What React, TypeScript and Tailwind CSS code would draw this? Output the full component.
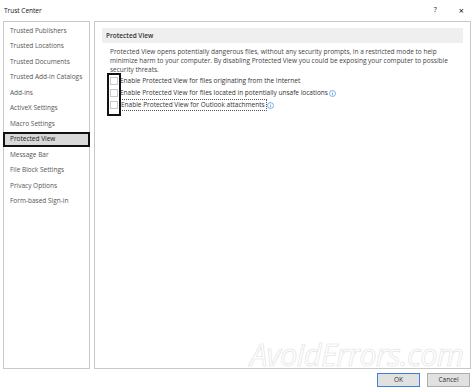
const menu = [
  'Trusted Publishers',
  'Trusted Locations',
  'Trusted Documents',
  'Trusted Add-in Catalogs',
  'Add-ins',
  'ActiveX Settings',
  'Macro Settings',
  'Protected View',
  'Message Bar',
  'File Block Settings',
  'Privacy Options',
  'Form-based Sign-in',
]

const options = [
  { label: 'Enable Protected View for files originating from the Internet', info: false },
  { label: 'Enable Protected View for files located in potentially unsafe locations', info: true },
  { label: 'Enable Protected View for Outlook attachments', info: true, focus: true },
]

function Info() {
  return (
    <svg width="7" height="7" viewBox="0 0 14 14" className="ml-[1px] shrink-0">
      <circle cx="7" cy="7" r="6" fill="none" stroke="#3c8ce0" strokeWidth="1.3" />
      <rect x="6.3" y="6" width="1.4" height="4.5" fill="#3c8ce0" />
      <rect x="6.3" y="3.3" width="1.4" height="1.4" fill="#3c8ce0" />
    </svg>
  )
}

export default function App() {
  return (
    <div
      className="w-[474px] h-[390px] bg-white flex flex-col text-[#444] overflow-hidden relative"
      style={{ fontFamily: '"Open Sans", "Noto Sans", sans-serif' }}
    >
      <div className="h-[21px] flex items-center pl-[4px] pr-[10px] text-[6.5px] text-[#111]">
        <span className="flex-1">Trust Center</span>
        <span className="mr-[22px] text-[7px]">?</span>
        <span className="text-[9px] leading-none">×</span>
      </div>

      <div className="flex-1 flex gap-[4px] px-[3px]">
        <div className="w-[87px] border border-[#c8c8c8] flex flex-col pt-[1px]">
          {menu.map((m) =>
            m === 'Protected View' ? (
              <div
                key={m}
                className="h-[15.5px] -mx-px flex items-center pl-[5px] text-[6.5px] bg-[#d9d9d9] border-2 border-[#111] text-[#222]"
              >
                {m}
              </div>
            ) : (
              <div key={m} className="h-[15.5px] flex items-center pl-[6px] text-[6.5px] text-[#555]">
                {m}
              </div>
            )
          )}
        </div>

        <div className="flex-1 border border-[#c8c8c8] px-[7px] pt-[6px]">
          <div className="h-[15px] bg-[#efefef] flex items-center pl-[4px] text-[6.5px] font-semibold text-[#333]">
            Protected View
          </div>
          <p className="mt-[4px] pl-[8px] pr-[14px] text-[6.5px] leading-[9px] text-[#444]">
            Protected View opens potentially dangerous files, without any security prompts, in a restricted mode to help
            minimize harm to your computer. By disabling Protected View you could be exposing your computer to possible
            security threats.
          </p>
          <div className="relative mt-[1px] ml-[5px] flex flex-col gap-[4px] pt-[2px]">
            <div className="absolute left-0 top-[-2px] w-[14px] h-[43px] border-2 border-[#111]" />
            {options.map((o) => (
              <div key={o.label} className="h-[8px] flex items-center pl-[3px] text-[6.5px] text-[#333]">
                <span className="w-[8px] h-[8px] border border-[#c8c8c8] bg-white shrink-0 mr-[2px]" />
                <span className={o.focus ? 'outline outline-1 outline-dotted outline-[#555] px-px' : ''}>
                  {o.label}
                </span>
                {o.info && <Info />}
              </div>
            ))}
          </div>
        </div>
      </div>

      <div className="h-[21px] flex items-center justify-end gap-[7px] pr-[4px]">
        <button className="w-[43px] h-[14px] bg-[#e1e1e1] border border-[#3c7fd6] text-[6.5px] text-[#333]">OK</button>
        <button className="w-[43px] h-[14px] bg-[#e1e1e1] border border-[#adadad] text-[6.5px] text-[#333]">Cancel</button>
      </div>

      <div
        className="absolute left-[250px] top-[339px] text-[31px] italic leading-none text-white tracking-tight pointer-events-none"
        style={{ WebkitTextStroke: '0.6px #e0e0e0' }}
      >
        AvoidErrors.com
      </div>
    </div>
  )
}
